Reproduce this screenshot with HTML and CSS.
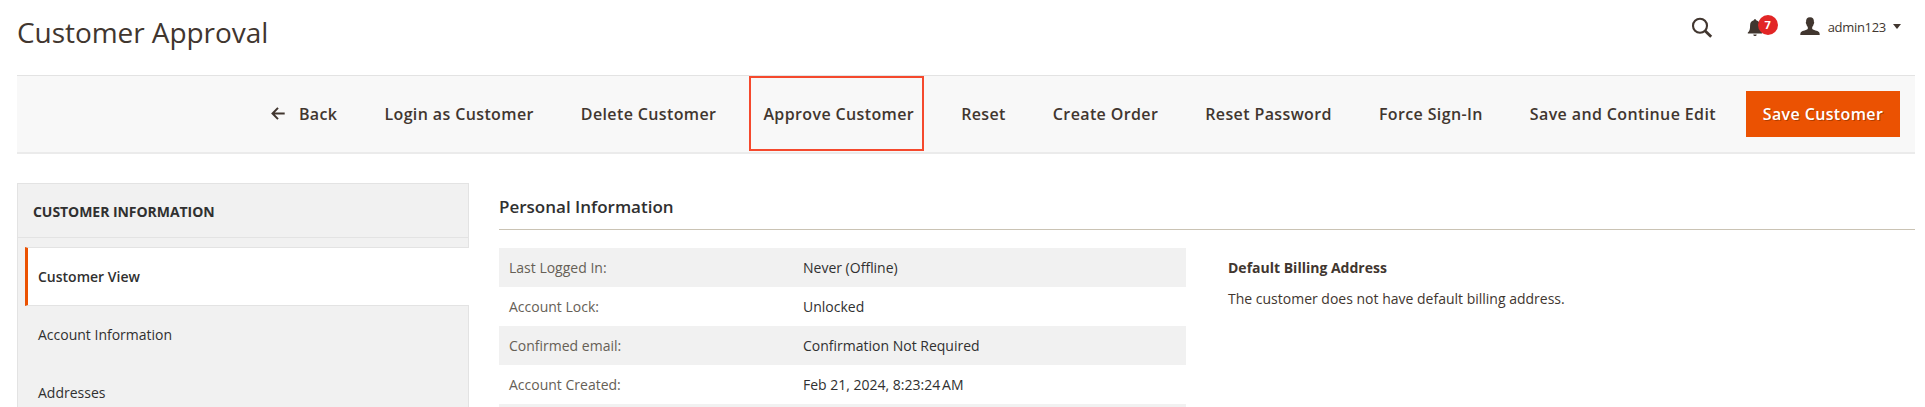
FILE: index.html
```html
<!DOCTYPE html>
<html lang="en">
<head>
<meta charset="utf-8">
<title>Customer Approval</title>
<link rel="stylesheet" href="styles.css">
</head>
<body>
<header class="page-header">
  <h1 class="page-title">Customer Approval</h1>
  <div class="header-tools">
    <svg class="icon-search" width="22" height="22" viewBox="0 0 22 22"><circle cx="9" cy="8.8" r="7" fill="none" stroke="#41362f" stroke-width="2.1"/><path d="M14 13.8l6.200 6" stroke="#41362f" stroke-width="2.8"/></svg>
    <div class="notifications">
      <svg width="16" height="18" viewBox="0 0 16 18" fill="#41362f"><path d="M8 0.2c.8 0 1.2.4 1.2 1.1 2.5.6 3.7 2.5 3.7 5 0 4.100.6 6 2.300 7.200v1.100H.8v-1.100c1.700-1.200 2.300-3.100 2.300-7.200 0-2.500 1.200-4.400 3.700-5C6.800.6 7.200.2 8 .2zM6.300 15.600h3.400c0 2-3.400 2-3.400 0z"/></svg>
      <span class="badge">7</span>
    </div>
    <div class="account">
      <svg width="20" height="19" viewBox="0 0 20 19" fill="#41362f"><path d="M10 .3c2.900 0 4.100 1.900 3.900 4.500.5.300.4 1.700-.3 2.400-.3 1.500-.9 2.300-1.400 2.800v2c1.200 1.200 5.200 1.600 6.700 2.900.6.600.8 1.700.8 3.100H.3c0-1.400.2-2.500.8-3.100 1.500-1.300 5.500-1.700 6.700-2.900v-2c-.5-.5-1.100-1.300-1.400-2.800-.7-.7-.8-2.100-.3-2.400C5.900 2.200 7.100.3 10 .3z"/></svg>
      <span class="account-name">admin123</span>
      <span class="caret"></span>
    </div>
  </div>
</header>
<div class="toolbar">
  <a class="action"><svg class="icon-back" width="14" height="13" viewBox="0 0 14 13" fill="none" stroke="#41362f" stroke-width="2"><path d="M13.700 6.500H1.600M7 .9L1.500 6.500 7 12.100"/></svg>Back</a>
  <a class="action">Login as Customer</a>
  <a class="action">Delete Customer</a>
  <a class="action highlighted">Approve Customer</a>
  <a class="action">Reset</a>
  <a class="action">Create Order</a>
  <a class="action">Reset Password</a>
  <a class="action">Force Sign-In</a>
  <a class="action">Save and Continue Edit</a>
  <button class="primary">Save Customer</button>
</div>
<main class="content">
  <nav class="sidebar">
    <div class="sidebar-title">Customer Information</div>
    <a class="tab active">Customer View</a>
    <a class="tab">Account Information</a>
    <a class="tab">Addresses</a>
  </nav>
  <section class="details">
    <h2 class="section-title">Personal Information</h2>
    <div class="columns">
      <dl class="facts">
        <div class="fact"><dt>Last Logged In:</dt><dd>Never (Offline)</dd></div>
        <div class="fact"><dt>Account Lock:</dt><dd>Unlocked</dd></div>
        <div class="fact"><dt>Confirmed email:</dt><dd>Confirmation Not Required</dd></div>
        <div class="fact"><dt>Account Created:</dt><dd>Feb 21, 2024, 8:23:24&#8239;AM</dd></div>
        <div class="fact partial"></div>
      </dl>
      <div class="address">
        <strong>Default Billing Address</strong>
        <p>The customer does not have default billing address.</p>
      </div>
    </div>
  </section>
</main>
</body>
</html>
```
FILE: styles.css
```css
* { box-sizing: border-box; }
body {
  margin: 0;
  height: 407px;
  overflow: hidden;
  padding: 0 10px 0 17px;
  background: #fff;
  color: #41362f;
  font: 14px/19px "Open Sans", sans-serif;
}
.page-header {
  display: flex;
  justify-content: space-between;
  height: 75px;
}
.page-title {
  margin: 13px 0 0;
  font-size: 28px;
  line-height: 38px;
  font-weight: 400;
  letter-spacing: -0.06px;
}
.header-tools {
  display: flex;
  align-items: flex-start;
  padding: 17px 14px 0 0;
}
.icon-search { margin-right: 34px; }
.notifications {
  position: relative;
  width: 53px;
  padding-top: 2px;
}
.notifications svg { display: block; }
.badge {
  position: absolute;
  left: 11px;
  top: -2px;
  width: 20px;
  height: 20px;
  border-radius: 50%;
  background: #e22626;
  color: #fff;
  font-size: 11px;
  font-weight: 700;
  line-height: 20px;
  text-align: center;
}
.account { display: flex; align-items: center; height: 19px; }
.account-name {
  margin: 1px 7px 0 8px;
  font-size: 13px;
  letter-spacing: -0.3px;
}
.caret {
  border: 4px solid transparent;
  border-top: 5px solid #41362f;
  border-bottom: 0;
}
.toolbar {
  display: flex;
  align-items: center;
  justify-content: flex-end;
  gap: 47px;
  height: 79px;
  padding-right: 15px;
  border-top: 1px solid #e3e3e3;
  border-bottom: 2px solid #ebebeb;
  background: #f8f8f8;
  font-size: 16px;
  font-weight: 600;
  letter-spacing: 0.38px;
  line-height: 22px;
  white-space: nowrap;
}
.action { position: relative; }
.icon-back { margin-right: 14px; }
.highlighted::after {
  content: "";
  position: absolute;
  inset: -27px -10px -26px -14px;
  border: 2px solid #f5492d;
}
.primary {
  width: 154px;
  height: 46px;
  margin: 0 0 0 -17px;
  padding: 0;
  border: 1px solid #eb5202;
  background: #eb5202;
  color: #fff;
  font: inherit;
  letter-spacing: inherit;
  text-shadow: 1px 1px 0 rgba(0, 0, 0, .25);
}
.content { display: flex; gap: 30px; padding-top: 29px; }
.sidebar {
  width: 452px;
  height: 224px;
  flex: none;
  border: 1px solid #e3e3e3;
  border-bottom: 0;
  background: #f1f1f1;
  color: #303030;
}
.sidebar-title {
  height: 54px;
  margin-bottom: 9px;
  padding: 18px 15px;
  border-bottom: 1px solid #e3e3e3;
  font-weight: 700;
  letter-spacing: -0.05px;
  text-transform: uppercase;
}
.tab {
  display: block;
  height: 58px;
  padding: 19px 13px;
  margin-left: 7px;
}
.tab:last-child { height: 42px; padding-bottom: 0; }
.tab.active {
  height: 59px;
  margin-right: -1px;
  padding: 19px 10px;
  border: 1px solid #e3e3e3;
  border-width: 1px 0 1px 3px;
  border-left-color: #eb5202;
  background: #fff;
  font-weight: 600;
}
.details { flex: 1; padding-top: 12px; }
.section-title {
  height: 35px;
  margin: 0 0 18px;
  border-bottom: 1px solid #cac3b4;
  color: #303030;
  font-size: 17px;
  font-weight: 600;
  line-height: 24px;
}
.columns { display: flex; gap: 42px; }
.facts { width: 687px; margin: 0; color: #303030; }
.fact {
  display: grid;
  grid-template-columns: 294px 1fr;
  height: 39px;
  padding: 10px;
}
.fact:nth-child(odd) { background: #f1f1f1; }
.fact.partial { height: 3px; padding: 0; }
.fact dt { color: #666056; }
.fact dd { margin: 0; }
.address { padding-top: 10px; }
.address strong { display: block; }
.address p { margin: 12px 0 0; }
```
